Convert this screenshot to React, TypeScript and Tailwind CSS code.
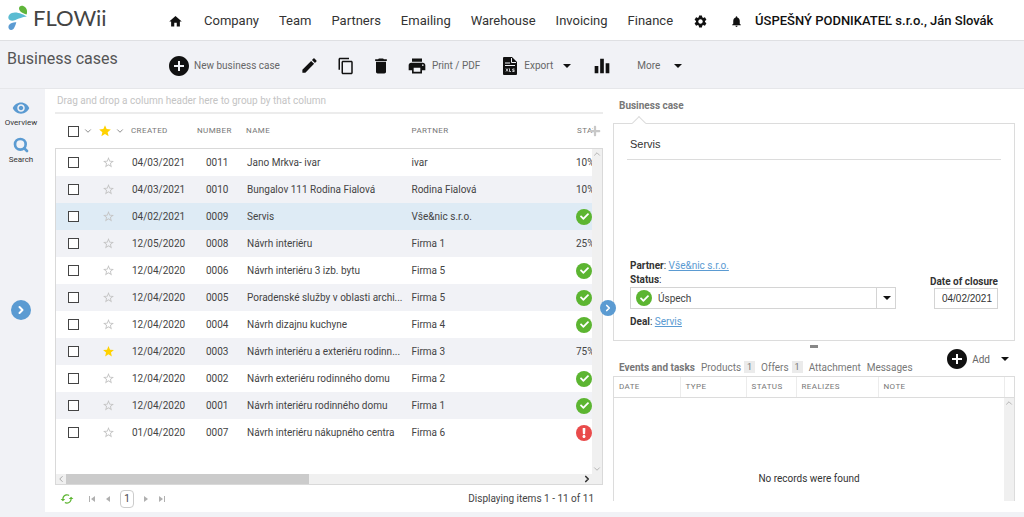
import React from "react";
import { ChevronDown, ChevronLeft, ChevronRight, ChevronUp, Search } from "lucide-react";
import {
  MdAddCircle,
  MdCached,
  MdContentCopy,
  MdDelete,
  MdEdit,
  MdEqualizer,
  MdHome,
  MdNotifications,
  MdPrint,
  MdSettings,
  MdStar,
  MdStarBorder,
  MdVisibility,
} from "react-icons/md";
import { FaCheck, FaExclamation, FaPlus } from "react-icons/fa";

type Row = {
  created: string;
  number: string;
  name: string;
  partner: string;
  status: string;
  starred?: boolean;
};

const rows: Row[] = [
  { created: "04/03/2021", number: "0011", name: "Jano Mrkva- ivar", partner: "ivar", status: "10%" },
  { created: "04/03/2021", number: "0010", name: "Bungalov 111 Rodina Fialová", partner: "Rodina Fialová", status: "10%" },
  { created: "04/02/2021", number: "0009", name: "Servis", partner: "Vše&nic s.r.o.", status: "won" },
  { created: "12/05/2020", number: "0008", name: "Návrh interiéru", partner: "Firma 1", status: "25%" },
  { created: "12/04/2020", number: "0006", name: "Návrh interiéru 3 izb. bytu", partner: "Firma 5", status: "won" },
  { created: "12/04/2020", number: "0005", name: "Poradenské služby v oblasti archi...", partner: "Firma 5", status: "won" },
  { created: "12/04/2020", number: "0004", name: "Návrh dizajnu kuchyne", partner: "Firma 4", status: "won" },
  { created: "12/04/2020", number: "0003", name: "Návrh interiéru a exteriéru rodinn...", partner: "Firma 3", status: "75%", starred: true },
  { created: "12/04/2020", number: "0002", name: "Návrh exteriéru rodinného domu", partner: "Firma 2", status: "won" },
  { created: "12/04/2020", number: "0001", name: "Návrh interiéru rodinného domu", partner: "Firma 1", status: "won" },
  { created: "01/04/2020", number: "0007", name: "Návrh interiéru nákupného centra", partner: "Firma 6", status: "lost" },
];

const navItems = ["Company", "Team", "Partners", "Emailing", "Warehouse", "Invoicing", "Finance"];

function Caret() {
  return (
    <svg viewBox="0 0 8 4" className="h-1 w-2 shrink-0 fill-[#111]" aria-hidden="true">
      <path d="M0 0h8L4 4z" />
    </svg>
  );
}

function Logo() {
  return (
    <a href="#" aria-label="FLOWii" className="flex w-[160px] items-center gap-[5px] self-start pt-[3px]">
      <svg viewBox="0 0 20 26" className="h-[26px] w-5" aria-hidden="true">
        <path d="M18.500 9.500C17 9.400 12.600 7.600 11.400 5.100C10.400 2.900 11.400 .9 13.600 .8C16.600 .7 18.500 3.200 18.900 5.200C19.200 6.800 19 8.500 18.500 9.500z" fill="#5fb53a" />
        <path d="M19 11.600C15.500 9.300 8.500 6.200 3.800 8C.9 9.200 0 11.700 .4 13.200C1 15.600 4 16.300 7.400 15C11.400 13.500 13.700 12.300 19 11.600z" fill="#5bbcd2" />
        <path d="M8.300 17.200C5.900 16.900 2.600 17.700 1 19.900C-.2 21.900 .5 24.600 3 25C5.800 25.300 7.500 20.300 8.300 17.200z" fill="#5b9bd2" />
      </svg>
      <span className="font-[Lato,sans-serif] text-[22px] leading-6 text-[#444]">FLOWii</span>
    </a>
  );
}

function ExportIcon() {
  return (
    <svg viewBox="0 0 14 18" className="h-[18px] w-3.5" aria-hidden="true">
      <path d="M1 0h8l5 5v12a1 1 0 0 1-1 1H1a1 1 0 0 1-1-1V1a1 1 0 0 1 1-1z" fill="#111" />
      <path d="M8.500 1v4.500H13M2 6h5M2 8.500h10" fill="none" stroke="#f1f2f6" />
      <path d="M3 11.500l2 3M5 11.500l-2 3M6.500 11.500v3h1.500M11.500 12H9.700v1.300h1.500v1.200H9.300" fill="none" stroke="#f1f2f6" strokeWidth=".8" />
    </svg>
  );
}

function StatusBadge({ status }: { status: string }) {
  if (status === "won")
    return (
      <span aria-label="Won" className="flex size-4 shrink-0 items-center justify-center rounded-full bg-[#5cb531]">
        <FaCheck className="size-[9px] text-white" />
      </span>
    );
  if (status === "lost")
    return (
      <span aria-label="Lost" className="flex size-4 shrink-0 items-center justify-center rounded-full bg-[#e94b4b]">
        <FaExclamation className="size-2.5 text-white" />
      </span>
    );
  return <span>{status}</span>;
}

function Columns() {
  return (
    <colgroup>
      <col className="w-9" />
      <col className="w-8" />
      <col className="w-[66px]" />
      <col className="w-[49px]" />
      <col />
      <col />
      <col className="w-6" />
    </colgroup>
  );
}

const checkbox = "block size-[11px] appearance-none border border-[#444] bg-white checked:bg-[#5b9bd2]";

function Toolbar() {
  return (
    <div className="flex h-12 items-center border-b border-[#e6e7ea] pt-0.5 text-[10px] text-[#666]">
      <h1 className="w-[167px] shrink-0 self-start pt-1 pl-[7px] text-base leading-6 text-[#555]">Business cases</h1>
      <button className="flex items-center gap-[3px]">
        <MdAddCircle className="size-6 text-[#111]" />
        New business case
      </button>
      <button aria-label="Edit" className="ml-5">
        <MdEdit className="size-[19px] text-[#111]" />
      </button>
      <button aria-label="Copy" className="ml-[18px]">
        <MdContentCopy className="size-[18px] text-[#111]" />
      </button>
      <button aria-label="Delete" className="ml-4">
        <MdDelete className="size-5 text-[#111]" />
      </button>
      <button className="ml-4 flex items-center gap-[5px]">
        <MdPrint className="size-5 text-[#111]" />
        Print / PDF
      </button>
      <button className="ml-[23px] flex items-center gap-[7px]">
        <ExportIcon />
        Export
        <span className="ml-[3px]">
          <Caret />
        </span>
      </button>
      <button aria-label="Statistics" className="ml-5">
        <MdEqualizer className="size-[22px] text-[#111]" />
      </button>
      <button className="ml-6 flex items-center gap-3.5">
        More
        <Caret />
      </button>
    </div>
  );
}

function CasesGrid() {
  return (
    <section className="flex min-w-0 flex-1 flex-col">
      <p className="h-[25px] border-b-2 border-[#ececec] pl-0.5 text-[10px] leading-[23px] text-[#c4c4c4]">
        Drag and drop a column header here to group by that column
      </p>
      <div className="flex h-[34px] items-center">
        <table className="w-full min-w-0 flex-1 table-fixed">
          <Columns />
          <thead>
            <tr className="text-left text-[8px] leading-4 tracking-wider text-[#777] [&>th]:font-normal">
              <th className="pl-[13px]">
                <span className="flex items-center gap-1">
                  <input type="checkbox" aria-label="Select all" className={checkbox + " shrink-0"} />
                  <ChevronDown className="size-2.5 shrink-0 text-[#777]" />
                </span>
              </th>
              <th className="pl-[7px]">
                <span className="flex items-center gap-[3px]">
                  <MdStar className="size-3.5 shrink-0 text-[#ffd200]" />
                  <ChevronDown className="size-2.5 shrink-0 text-[#777]" />
                </span>
              </th>
              <th className="pl-2">CREATED</th>
              <th className="pl-2">NUMBER</th>
              <th className="pl-2">NAME</th>
              <th className="pl-2">PARTNER</th>
              <th className="overflow-hidden pl-2">STATUS</th>
            </tr>
          </thead>
        </table>
        <button aria-label="Add column" className="-ml-1 w-3.5">
          <FaPlus className="size-3 text-[#c8c8c8]" />
        </button>
      </div>
      <div className="flex flex-1 flex-col border border-[#d9d9d9]">
        <div className="flex flex-1">
          <div className="min-w-0 flex-1">
            <table className="w-full table-fixed text-[10px] leading-4 text-[#444]">
              <Columns />
              <tbody>
                {rows.map((r) => (
                  <tr
                    key={r.number}
                    className={"h-[27px] " + (r.number === "0009" ? "bg-[#deebf5]" : "odd:bg-white even:bg-[#f1f2f6]")}
                  >
                    <td className="pl-3">
                      <input type="checkbox" aria-label={r.name} className={checkbox} />
                    </td>
                    <td className="pl-2.5">
                      <button aria-label="Favourite" className="block">
                        {r.starred ? (
                          <MdStar className="size-[13px] text-[#ffd200]" />
                        ) : (
                          <MdStarBorder className="size-[13px] text-[#c4c4c4]" />
                        )}
                      </button>
                    </td>
                    <td className="pl-2">{r.created}</td>
                    <td className="pl-4">{r.number}</td>
                    <td className="truncate pl-2">{r.name}</td>
                    <td className="truncate pl-2">{r.partner}</td>
                    <td className="overflow-hidden pl-2">
                      <StatusBadge status={r.status} />
                    </td>
                  </tr>
                ))}
              </tbody>
            </table>
          </div>
          <div className="flex w-2.5 flex-col items-center justify-between bg-[#f0f0f0] text-[#aaa]">
            <ChevronUp className="size-2.5" />
            <ChevronDown className="size-2.5" />
          </div>
        </div>
        <div className="flex h-2.5 items-center bg-[#f0f0f0] pr-2.5">
          <ChevronLeft className="size-2.5 text-[#999]" />
          <div className="h-full flex-1">
            <div className="h-full w-[47%] bg-[#cbcbcb]" />
          </div>
          <ChevronRight className="size-2.5 text-[#333]" strokeWidth={4} />
        </div>
      </div>
      <div className="flex h-[27px] items-center pr-[9px] pl-[5px] text-[10px] text-[#444]">
        <button aria-label="Refresh">
          <MdCached className="size-3.5 text-[#5cb531]" />
        </button>
        <button aria-label="First page" className="ml-3.5">
          <svg viewBox="0 0 8 8" className="size-2 fill-[#b0b0b0]"><path d="M1 1h1v6H1zM7 1v6L3 4z" /></svg>
        </button>
        <button aria-label="Previous page" className="ml-2">
          <svg viewBox="0 0 8 8" className="size-2 fill-[#b0b0b0]"><path d="M6 1v6L2 4z" /></svg>
        </button>
        <button className="ml-2 h-[18px] w-3.5 rounded border border-[#ccc]">1</button>
        <button aria-label="Next page" className="ml-2">
          <svg viewBox="0 0 8 8" className="size-2 fill-[#b0b0b0]"><path d="M2 1v6l4-3z" /></svg>
        </button>
        <button aria-label="Last page" className="ml-2">
          <svg viewBox="0 0 8 8" className="size-2 fill-[#b0b0b0]"><path d="M6 1h1v6H6zM1 1v6l4-3z" /></svg>
        </button>
        <span className="ml-auto">Displaying items 1 - 11 of 11</span>
      </div>
    </section>
  );
}

function CaseDetail() {
  return (
    <>
      <h2 className="h-[34px] pt-2.5 pl-1.5 text-[10px] leading-[14px] font-bold text-[#777]">Business case</h2>
      <div className="relative flex h-[218px] flex-col border border-[#dcdcdc] px-[13px] text-[10px] text-[#333]">
        <span className="absolute -top-[6px] left-5 size-2.5 rotate-45 border-t border-l border-[#dcdcdc] bg-white" />
        <h3 className="h-9 border-b border-[#dcdcdc] pt-3 pl-[3px] font-['Liberation_Sans',sans-serif] text-[11px] leading-4">Servis</h3>
        <div className="mt-auto flex items-end justify-between pr-[3px] pb-[31px] pl-[3px]">
          <div className="w-[266px]">
            <p className="leading-[15px]">
              <b className="font-bold">Partner</b>: <a href="#" className="text-[#5b9bd2] underline">Vše&amp;nic s.r.o.</a>
            </p>
            <label htmlFor="status" className="block leading-[14px]">
              <b className="font-bold">Status</b>:
            </label>
            <div className="relative">
              <select id="status" className="block h-[22px] w-full appearance-none border border-[#d4d4d4] bg-white pl-[27px] text-[10px] text-[#444]">
                <option>Úspech</option>
              </select>
              <span className="pointer-events-none absolute top-[3px] left-1.5">
                <StatusBadge status="won" />
              </span>
              <span className="pointer-events-none absolute inset-y-0 right-0 flex w-5 items-center justify-center border-l border-[#d4d4d4]">
                <Caret />
              </span>
            </div>
          </div>
          <div className="flex flex-col items-end">
            <label htmlFor="closure" className="leading-3 font-bold">Date of closure</label>
            <input
              id="closure"
              defaultValue="04/02/2021"
              className="h-[21px] w-16 border border-[#d4d4d4] pr-[5px] text-right font-['Liberation_Sans',sans-serif] text-[10px]"
            />
          </div>
        </div>
        <p className="absolute bottom-3 left-4 leading-3">
          <b className="font-bold">Deal</b>: <a href="#" className="text-[#5b9bd2] underline">Servis</a>
        </p>
      </div>
    </>
  );
}

function Tab({ label, count }: { label: string; count?: number }) {
  return (
    <button className="flex items-center gap-[3px]">
      {label}
      {count !== undefined && <span className="-mt-0.5 h-3 w-[11px] bg-[#ebebeb] text-[9px] leading-3">{count}</span>}
    </button>
  );
}

function Events() {
  return (
    <>
      <div className="relative flex h-[35px] items-end justify-between">
        <div className="flex items-center gap-1.5 pb-0.5 pl-1.5 text-[10px] leading-3 text-[#777]">
          <button className="font-bold">Events and tasks</button>
          <Tab label="Products" count={1} />
          <Tab label="Offers" count={1} />
          <Tab label="Attachment" />
          <Tab label="Messages" />
        </div>
        <span className="absolute top-1 left-1/2 h-[3px] w-2 -translate-x-1/2 bg-[#888]" />
        <button className="mr-1.5 mb-[5px] flex items-center gap-[3px] text-[10px] text-[#666]">
          <MdAddCircle className="size-6 text-[#111]" />
          Add
          <span className="ml-2">
            <Caret />
          </span>
        </button>
      </div>
      <div className="mb-[11px] flex flex-1 flex-col border border-b-0 border-[#dcdcdc]">
        <table className="w-full table-fixed">
          <colgroup>
            <col className="w-[66px]" />
            <col className="w-[66px]" />
            <col className="w-[50px]" />
            <col className="w-[82px]" />
            <col />
            <col className="w-2.5" />
          </colgroup>
          <thead>
            <tr className="h-5 text-left text-[8px] leading-4 tracking-wider text-[#777] [&>th]:border-r [&>th]:border-b [&>th]:border-r-[#ececec] [&>th]:border-b-[#dcdcdc] [&>th]:pl-[5px] [&>th]:font-normal [&>th:last-child]:border-r-0">
              <th>DATE</th>
              <th>TYPE</th>
              <th>STATUS</th>
              <th>REALIZES</th>
              <th>NOTE</th>
              <th aria-label="Scroll" />
            </tr>
          </thead>
        </table>
        <div className="flex flex-1">
          <p className="flex-1 self-end pb-4 text-center text-[10px] leading-3 text-[#333]">No records were found</p>
          <div className="w-2.5 bg-[#f0f0f0] text-[#aaa]">
            <ChevronUp className="size-2.5" />
          </div>
        </div>
      </div>
    </>
  );
}

export default function App() {
  return (
    <div className="flex min-h-screen flex-col bg-[#f1f2f6] font-[Roboto,sans-serif]">
      <header className="flex h-[41px] items-center border-b border-[#dfe0e3] bg-white pt-0.5 pl-2 text-[13px] text-[#333]">
        <Logo />
        <nav className="flex items-center gap-5">
          <a href="#" aria-label="Home" className="mr-px">
            <MdHome className="size-[15px] text-[#111]" />
          </a>
          {navItems.map((n) => (
            <a key={n} href="#">{n}</a>
          ))}
          <a href="#" aria-label="Settings">
            <MdSettings className="size-[15px] text-[#111]" />
          </a>
        </nav>
        <button aria-label="Notifications" className="ml-[22px]">
          <MdNotifications className="size-[13px] text-[#111]" />
        </button>
        <button className="ml-3 font-medium whitespace-nowrap text-[#111]">ÚSPEŠNÝ PODNIKATEĽ s.r.o., Ján Slovák</button>
      </header>
      <Toolbar />
      <div className="flex flex-1 pb-[5px]">
        <aside className="flex w-[45px] shrink-0 flex-col items-center pt-2.5 pr-[3px] text-[8px] leading-3 text-[#333]">
          <a href="#" className="flex flex-col items-center">
            <MdVisibility className="size-[18px] text-[#5b9bd2]" />
            Overview
          </a>
          <a href="#" className="mt-2 flex flex-col items-center">
            <Search className="mb-px size-4 text-[#5b9bd2]" strokeWidth={4} />
            Search
          </a>
          <button aria-label="Expand" className="mt-[134px] flex size-5 items-center justify-center rounded-full bg-[#5b9bd2]">
            <ChevronRight className="size-3 text-white" strokeWidth={4} />
          </button>
        </aside>
        <main className="flex min-w-0 flex-1 gap-2.5 bg-white pr-[9px] pl-2.5">
          <CasesGrid />
          <section className="relative flex w-[402px] shrink-0 flex-col">
            <CaseDetail />
            <Events />
            <button aria-label="Collapse" className="absolute top-[211px] -left-[13px] flex size-4 items-center justify-center rounded-full bg-[#5b9bd2]">
              <ChevronRight className="size-2.5 text-white" strokeWidth={4} />
            </button>
          </section>
        </main>
      </div>
    </div>
  );
}
